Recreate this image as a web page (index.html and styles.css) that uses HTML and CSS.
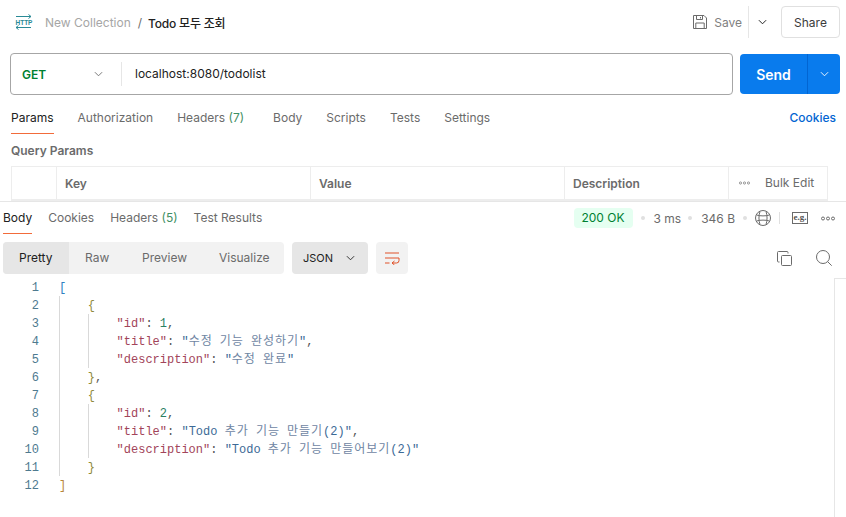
FILE: index.html
```html
<!DOCTYPE html>
<html lang="en">
<head>
    <meta charset="UTF-8">
    <meta name="viewport" content="width=device-width, initial-scale=1.0">
    <title>Todo 모두 조회</title>
    <link rel="stylesheet" href="styles.css">
</head>
<body>
    <div class="request">
        <div class="titlebar">
            <svg class="http-icon" width="18" height="18" viewBox="0 0 18 18" fill="none" stroke="#2a8a96" stroke-width="1">
                <path d="M1 3.500h15M13.500 1.500l2.500 2-2.500 2M1 14.500h15M3.500 12.500l-2.500 2 2.500 2"/>
                <text transform="translate(0.500 12) scale(1 1.250)" class="http-text">HTTP</text>
            </svg>
            <span class="crumb">New Collection</span>
            <span class="crumb-sep">/</span>
            <span class="crumb-name">Todo 모두 조회</span>
            <div class="title-actions">
                <svg width="16" height="16" viewBox="0 0 16 16" fill="none" stroke="#6b6b6b">
                    <path d="M1.500 1.500h10.500l2.500 2.500v10.500h-13zM4.500 1.500v4h6v-4M8.500 3v1.500M3.800 14.500v-5.500h8.400v5.500"/>
                </svg>
                <span class="save">Save</span>
                <span class="save-drop">
                    <svg width="9" height="6" viewBox="0 0 10 6" fill="none" stroke="#212121" stroke-width="1.100"><path d="M1 1l4 4 4-4"/></svg>
                </span>
                <button class="share">Share</button>
            </div>
        </div>

        <div class="urlrow">
            <div class="urlbox">
                <div class="method">
                    <span>GET</span>
                    <svg width="9" height="6" viewBox="0 0 10 6" fill="none" stroke="#6b6b6b"><path d="M1 1l4 4 4-4"/></svg>
                </div>
                <div class="url">localhost:8080/todolist</div>
            </div>
            <div class="send">
                <span class="send-label">Send</span>
                <span class="send-drop">
                    <svg width="9" height="6" viewBox="0 0 10 6" fill="none" stroke="#fff"><path d="M1 1l4 4 4-4"/></svg>
                </span>
            </div>
        </div>

        <div class="tabs">
            <span class="tab active">Params</span>
            <span class="tab">Authorization</span>
            <span class="tab tab-headers">Headers <em>(7)</em></span>
            <span class="tab">Body</span>
            <span class="tab">Scripts</span>
            <span class="tab">Tests</span>
            <span class="tab">Settings</span>
            <span class="cookies">Cookies</span>
        </div>

        <div class="query-title">Query Params</div>
        <div class="params">
            <div class="cell cell-check"></div>
            <div class="cell cell-key">Key</div>
            <div class="cell cell-value">Value</div>
            <div class="cell cell-desc">Description</div>
            <div class="cell cell-bulk">
                <svg width="11" height="4" viewBox="0 0 11 4" fill="none" stroke="#808080" stroke-width="0.800">
                    <circle cx="1.500" cy="2" r="1.100"/><circle cx="5.500" cy="2" r="1.100"/><circle cx="9.500" cy="2" r="1.100"/>
                </svg>
                <span>Bulk Edit</span>
            </div>
        </div>
    </div>

    <div class="response">
        <div class="res-head">
            <span class="res-tab active">Body</span>
            <span class="res-tab">Cookies</span>
            <span class="res-tab">Headers <em>(5)</em></span>
            <span class="res-tab">Test Results</span>
            <div class="res-meta">
                <span class="status">200 OK</span>
                <i class="dot"></i>
                <span>3 ms</span>
                <i class="dot"></i>
                <span>346 B</span>
                <i class="dot"></i>
                <svg class="globe" width="16" height="16" viewBox="0 0 16 16" fill="none" stroke="#6b6b6b">
                    <circle cx="8" cy="8" r="7.500"/>
                    <path d="M5 1.500c-1.400 4-1.400 9 0 13M11 1.500c1.400 4 1.400 9 0 13M1.500 5c4 1.200 9 1.200 13 0M1.500 11c4-1.200 9-1.200 13 0"/>
                </svg>
                <i class="bar"></i>
                <span class="eg">e.g.</span>
                <svg class="more" width="14" height="5" viewBox="0 0 14 5" fill="none" stroke="#6b6b6b">
                    <circle cx="2" cy="2.500" r="1.500"/><circle cx="7" cy="2.500" r="1.500"/><circle cx="12" cy="2.500" r="1.500"/>
                </svg>
            </div>
        </div>

        <div class="toolbar">
            <div class="views">
                <span class="view active">Pretty</span>
                <span class="view view-raw">Raw</span>
                <span class="view view-preview">Preview</span>
                <span class="view view-visual">Visualize</span>
            </div>
            <div class="format">
                <span>JSON</span>
                <svg width="9" height="6" viewBox="0 0 10 6" fill="none" stroke="#212121"><path d="M1 1l4 4 4-4"/></svg>
            </div>
            <div class="wrap">
                <svg width="15" height="13" viewBox="0 0 15 13" fill="none" stroke="#e0532a">
                    <path d="M0 1h14M0 6h14M0 11h4.500M14 6v2.500q0 2.500-2.500 2.500h-4.500M9.500 9l-2.500 2 2.500 2"/>
                </svg>
            </div>
            <div class="tools">
                <svg width="15" height="15" viewBox="0 0 15 15" fill="none" stroke="#6b6b6b">
                    <rect x="4.500" y="4.500" width="10" height="10" rx="1"/><path d="M2.500 11h-1q-1 0-1-1v-8.500q0-1 1-1h8.500q1 0 1 1v1"/>
                </svg>
                <svg width="16" height="16" viewBox="0 0 16 16" fill="none" stroke="#6b6b6b">
                    <circle cx="7" cy="7" r="6.500"/><path d="M11.700 11.700l4 4"/>
                </svg>
            </div>
        </div>

        <div class="code-area">
            <div class="gutter">
                <div>1</div><div>2</div><div>3</div><div>4</div><div>5</div><div>6</div>
                <div>7</div><div>8</div><div>9</div><div>10</div><div>11</div><div>12</div>
            </div>
            <div class="code">
                <i class="guide guide-a"></i>
                <i class="guide guide-b"></i>
                <i class="guide guide-c"></i>
                <div class="line"><span class="br">[</span></div>
                <div class="line">    <span class="br2">{</span></div>
                <div class="line">        <span class="k">"id"</span>: <span class="n">1</span>,</div>
                <div class="line">        <span class="k">"title"</span>: <span class="s">"<span class="ko">수정</span> <span class="ko">기능</span> <span class="ko">완성하기</span>"</span>,</div>
                <div class="line">        <span class="k">"description"</span>: <span class="s">"<span class="ko">수정</span> <span class="ko">완료</span>"</span></div>
                <div class="line">    <span class="br2">}</span>,</div>
                <div class="line">    <span class="br2">{</span></div>
                <div class="line">        <span class="k">"id"</span>: <span class="n">2</span>,</div>
                <div class="line">        <span class="k">"title"</span>: <span class="s">"Todo <span class="ko">추가</span> <span class="ko">기능</span> <span class="ko">만들기</span>(2)"</span>,</div>
                <div class="line">        <span class="k">"description"</span>: <span class="s">"Todo <span class="ko">추가</span> <span class="ko">기능</span> <span class="ko">만들어보기</span>(2)"</span></div>
                <div class="line">    <span class="br2">}</span></div>
                <div class="line"><span class="br3">]</span></div>
            </div>
            <div class="scroll-track"></div>
        </div>
    </div>
</body>
</html>
```

FILE: styles.css
```css
*{
    box-sizing: border-box;
}
html, body{
    height: 100%;
}
body{
    margin: 0;
    overflow: hidden;
    background-color: #fff;
    color: #6b6b6b;
    font-family: Inter, "Noto Sans CJK KR", sans-serif;
    font-size: 12px;
}
.request{
    height: 201px;
    overflow: hidden;
}

/* title bar */
.titlebar{
    display: flex;
    align-items: center;
    height: 44px;
    padding: 0 6px 0 15px;
}
.http-icon{
    margin-right: 12px;
}
.http-text{
    font-family: "Liberation Sans", sans-serif;
    font-size: 6.500px;
    font-weight: 700;
    fill: #2a8a96;
    stroke: none;
}
.crumb{
    color: #a6a6a6;
}
.crumb-sep{
    margin: 0 6px 0 7px;
    color: #6b6b6b;
}
.crumb-name{
    color: #212121;
    font-weight: 500;
    letter-spacing: -.2px;
}
.title-actions{
    display: flex;
    align-items: center;
    margin-left: auto;
}
.save{
    margin: 0 6px 0 6px;
    color: #808080;
}
.save-drop{
    display: flex;
    align-items: center;
    justify-content: center;
    width: 25px;
    height: 32px;
    margin-right: 8px;
    border-left: 1px solid #e6e6e6;
    padding-left: 2px;
}
.share{
    width: 59px;
    height: 32px;
    padding: 0;
    border: 1px solid #e0e0e0;
    border-radius: 4px;
    background: #fff;
    color: #3b3b3b;
    font: inherit;
}

/* url row */
.urlrow{
    display: flex;
    gap: 7px;
    height: 42px;
    margin-top: 9px;
    padding: 0 6px 0 10px;
}
.urlbox{
    display: flex;
    align-items: center;
    flex: 1;
    border: 1px solid #a6a6a6;
    border-radius: 4px;
}
.method{
    display: flex;
    align-items: center;
    justify-content: space-between;
    width: 111px;
    height: 24px;
    padding: 0 18px 0 11px;
    border-right: 1px solid #e6e6e6;
    color: #007f31;
    font-weight: 600;
}
.url{
    padding: 0 0 2px 13px;
    color: #212121;
}
.send{
    display: flex;
    align-items: center;
    width: 100px;
    height: 40px;
    margin-top: 1px;
    border-radius: 4px;
    background-color: #097bed;
    color: #fff;
    font-size: 14px;
    font-weight: 600;
}
.send-label{
    width: 67px;
    text-align: center;
}
.send-drop{
    display: flex;
    align-items: center;
    justify-content: center;
    flex: 1;
    height: 100%;
    border-left: 1px solid #0265d2;
}

/* request tabs */
.tabs{
    display: flex;
    height: 39px;
    padding: 0 10px 0 11px;
}
.tab{
    height: 100%;
    margin-right: 24px;
    padding-top: 15px;
    line-height: 16px;
}
.tab.active{
    height: 39px;
    border-bottom: 1px solid #f26b3a;
    color: #212121;
}
.tab-headers{
    margin-right: 29px;
}
em{
    color: #3f8f63;
    font-style: normal;
}
.cookies{
    margin-left: auto;
    padding-top: 15px;
    line-height: 16px;
    color: #0265d2;
    font-weight: 500;
}
.query-title{
    margin: 9px 0 0 11px;
    line-height: 16px;
    font-weight: 600;
}
.params{
    display: grid;
    grid-template-columns: 44px 254px 254px 164px 100px;
    width: 817px;
    height: 35px;
    margin: 7px 0 0 11px;
    border: 1px solid #ededed;
    border-bottom-width: 2px;
    font-weight: 600;
}
.cell{
    display: flex;
    align-items: center;
    padding: 1px 0 0 8px;
    border-left: 1px solid #ededed;
    line-height: 16px;
}
.cell-check{
    border-left: 0;
}
.cell-bulk{
    gap: 15px;
    padding: 0 0 1px 10px;
    font-weight: 400;
    color: #6b6b6b;
}

/* response */
.response{
    height: 316px;
    border-top: 1px solid #e6e6e6;
}
.res-head{
    display: flex;
    align-items: center;
    height: 32px;
    padding: 0 11px 0 3px;
}
.res-tab{
    height: 32px;
    margin-right: 16px;
    padding-top: 8px;
    line-height: 16px;
}
.res-tab.active{
    border-bottom: 1px solid #f26b3a;
    color: #212121;
}
.res-meta{
    display: flex;
    align-items: center;
    margin-left: auto;
}
.status{
    width: 59px;
    height: 20px;
    margin-right: 8px;
    border-radius: 4px;
    background-color: #e5fff1;
    color: #007f31;
    line-height: 20px;
    text-align: center;
}
.dot{
    width: 4px;
    height: 4px;
    margin: 0 9px 0 0;
    border-radius: 50%;
    background-color: #e0e0e0;
}
.dot + span{
    margin-right: 7px;
}
.dot + span + .dot + span{
    margin-right: 8px;
}
.globe{
    margin-left: -1px;
}
.bar{
    width: 1px;
    height: 12px;
    margin: 0 12px 0 8px;
    background-color: #e0e0e0;
}
.eg{
    width: 16px;
    height: 12px;
    margin-right: 13px;
    border: 1px solid #6b6b6b;
    color: #555;
    font-family: "Liberation Serif", serif;
    font-size: 9px;
    font-weight: 700;
    line-height: 9px;
    text-align: center;
}
.toolbar{
    display: flex;
    align-items: center;
    height: 32px;
    margin-top: 8px;
    padding: 0 14px 0 3px;
}
.views{
    display: flex;
    width: 281px;
    height: 32px;
    border-radius: 4px;
    background-color: #f2f2f2;
    line-height: 32px;
    overflow: hidden;
}
.view{
    padding-left: 16px;
}
.view.active{
    width: 66px;
    background-color: #e6e6e6;
    color: #212121;
}
.view-raw{
    width: 57px;
}
.view-preview{
    width: 77px;
}
.format{
    display: flex;
    align-items: center;
    justify-content: space-between;
    width: 76px;
    height: 32px;
    margin-left: 8px;
    padding: 0 13px 0 11px;
    border-radius: 4px;
    background-color: #e6e6e6;
    color: #212121;
    font-size: 11px;
}
.wrap{
    display: flex;
    align-items: center;
    justify-content: center;
    width: 32px;
    height: 32px;
    margin-left: 8px;
    border-radius: 4px;
    background-color: #f2f2f2;
}
.tools{
    display: flex;
    align-items: center;
    gap: 24px;
    margin-left: auto;
}

/* code */
.code-area{
    display: flex;
    height: 239px;
    margin-top: 4px;
    font-family: "Liberation Mono", "Noto Sans CJK KR", monospace;
    font-size: 12px;
    line-height: 18px;
}
.gutter{
    width: 39px;
    padding-top: 1px;
    color: #4e7a8f;
    text-align: right;
}
.code{
    position: relative;
    flex: 1;
    margin-left: 20px;
    padding-top: 1px;
    color: #545454;
}
.line{
    height: 18px;
    white-space: pre;
}
.k{
    color: #a2445a;
}
.s{
    color: #3c6a96;
}
.ko{
    color: #6f86a3;
    letter-spacing: .96px;
}
.n{
    color: #2a7f62;
}
.br{
    color: #2f7fc1;
}
.br2{
    color: #8f8a3a;
}
.br3{
    color: #b8863a;
}
.guide{
    position: absolute;
    width: 1px;
    background-color: #d9d9d9;
}
.guide-a{
    left: 0;
    top: 18px;
    height: 180px;
}
.guide-b{
    left: 29px;
    top: 36px;
    height: 54px;
}
.guide-c{
    left: 29px;
    top: 126px;
    height: 54px;
}
.scroll-track{
    width: 12px;
    border-left: 1px solid #e6e6e6;
    border-top: 1px solid #e6e6e6;
}
```
